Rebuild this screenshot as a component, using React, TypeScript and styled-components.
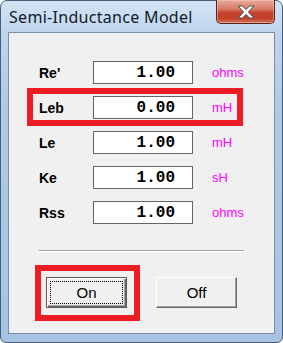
import { createGlobalStyle, styled } from "styled-components"

const GlobalStyle = createGlobalStyle`
  html, body {
    margin: 0;
    padding: 0;
    background: #ffffff;
  }
  body {
    width: 283px;
    height: 343px;
    overflow: hidden;
  }
`

const RED = "#ed1c24"

type Field = {
  label: string
  value: string
  unit: string
  highlighted?: boolean
}

const fields: Field[] = [
  { label: "Re'", value: "1.00", unit: "ohms" },
  { label: "Leb", value: "0.00", unit: "mH", highlighted: true },
  { label: "Le", value: "1.00", unit: "mH" },
  { label: "Ke", value: "1.00", unit: "sH" },
  { label: "Rss", value: "1.00", unit: "ohms" },
]

const S = {
  Window: styled.div`
    box-sizing: border-box;
    width: 283px;
    height: 343px;
    display: flex;
    flex-direction: column;
    padding: 0 7px 8px;
    border: 1px solid #4a5d75;
    border-radius: 7px 7px 6px 6px;
    background: linear-gradient(
      180deg,
      #d3e3f4 0%,
      #c0d6ee 9%,
      #aec9e9 30%,
      #a6c3e6 100%
    );
  `,
  TitleBar: styled.div`
    height: 31px;
    display: flex;
    justify-content: space-between;
    align-items: flex-start;
  `,
  Title: styled.span`
    padding: 6px 0 0 1px;
    font-family: "Noto Sans", "Open Sans", sans-serif;
    font-size: 16px;
    letter-spacing: 0.3px;
    line-height: 21px;
    color: #111a29;
  `,
  CloseButton: styled.div`
    box-sizing: border-box;
    width: 59px;
    height: 24px;
    margin-top: -1px;
    display: flex;
    align-items: center;
    justify-content: center;
    border: 1px solid #5c2219;
    border-top: none;
    border-radius: 0 0 5px 5px;
    background: linear-gradient(
      180deg,
      #e9a99b 0%,
      #d67a68 40%,
      #c4432f 55%,
      #c0402b 80%,
      #d2745f 100%
    );
    box-shadow: inset 0 0 0 1px rgba(255, 210, 200, 0.45);
  `,
  Client: styled.div`
    flex: 1;
    display: flex;
    flex-direction: column;
    padding-top: 22px;
    background: #f0f0f0;
    border: 1px solid #7b8ea6;
  `,
  Form: styled.div`
    display: flex;
    flex-direction: column;
    padding-left: 30px;
  `,
  Row: styled.div<{ $highlighted?: boolean }>`
    position: relative;
    width: 204px;
    height: 35px;
    display: grid;
    grid-template-columns: 54px 100px auto;
    align-items: center;

    &::after {
      content: "";
      display: ${({ $highlighted }) => ($highlighted ? "block" : "none")};
      position: absolute;
      top: -2px;
      bottom: -1px;
      left: -12px;
      right: 0;
      border: 6px solid ${RED};
      pointer-events: none;
    }
  `,
  Label: styled.span`
    font-family: "Liberation Sans", Arial, sans-serif;
    font-weight: 700;
    font-size: 14px;
    color: #000000;
  `,
  ValueBox: styled.div`
    box-sizing: border-box;
    height: 23px;
    padding-right: 17px;
    display: flex;
    align-items: center;
    justify-content: flex-end;
    background: #ffffff;
    border: 1px solid #646464;
    font-family: "Liberation Mono", "Courier New", monospace;
    font-weight: 700;
    font-size: 16px;
    color: #000000;
  `,
  Unit: styled.span`
    padding-left: 19px;
    font-family: "Liberation Sans", Arial, sans-serif;
    font-size: 13px;
    color: #ff00ff;
  `,
  Separator: styled.div`
    width: 205px;
    margin: 20px 0 0 30px;
    border-top: 1px solid #a0a0a0;
    border-bottom: 1px solid #ffffff;
  `,
  ButtonRow: styled.div`
    display: flex;
    gap: 29px;
    margin-top: 25px;
    padding-left: 37px;
  `,
  Button: styled.button<{ $default?: boolean; $highlighted?: boolean }>`
    position: relative;
    box-sizing: border-box;
    width: 81px;
    height: 31px;
    padding: 0;
    background: #f0f0f0;
    font-family: "Liberation Sans", Arial, sans-serif;
    font-size: 15px;
    color: #000000;
    border: 1px solid;
    border-color: ${({ $default }) =>
      $default ? "#5a5a5a" : "#ffffff #696969 #696969 #ffffff"};
    box-shadow: ${({ $default }) =>
      $default
        ? "inset 1px 1px #ffffff, inset -1px -1px #696969, inset -2px -2px #a0a0a0"
        : "inset -1px -1px #a0a0a0"};

    &::before {
      content: "";
      display: ${({ $default }) => ($default ? "block" : "none")};
      position: absolute;
      inset: 3px;
      border: 1px dotted #000000;
    }

    &::after {
      content: "";
      display: ${({ $highlighted }) => ($highlighted ? "block" : "none")};
      position: absolute;
      top: -13px;
      left: -12px;
      right: -14px;
      bottom: -14px;
      border: 6px solid ${RED};
      pointer-events: none;
    }
  `,
}

const CloseGlyph = () => (
  <svg width="18" height="14" viewBox="-1 -1 18 14">
    <polygon
      points="0,0 4.5,0 8,3.6 11.5,0 16,0 10.4,6 16,12 11.5,12 8,8.4 4.5,12 0,12 5.6,6"
      fill="#ffffff"
      stroke="#4a4a4a"
      strokeWidth="1"
      strokeLinejoin="round"
    />
  </svg>
)

export default function App() {
  return (
    <>
      <GlobalStyle />
      <S.Window>
        <S.TitleBar>
          <S.Title>Semi-Inductance Model</S.Title>
          <S.CloseButton>
            <CloseGlyph />
          </S.CloseButton>
        </S.TitleBar>
        <S.Client>
          <S.Form>
            {fields.map((f) => (
              <S.Row key={f.label} $highlighted={f.highlighted}>
                <S.Label>{f.label}</S.Label>
                <S.ValueBox>{f.value}</S.ValueBox>
                <S.Unit>{f.unit}</S.Unit>
              </S.Row>
            ))}
          </S.Form>
          <S.Separator />
          <S.ButtonRow>
            <S.Button $default $highlighted>
              On
            </S.Button>
            <S.Button>Off</S.Button>
          </S.ButtonRow>
        </S.Client>
      </S.Window>
    </>
  )
}
